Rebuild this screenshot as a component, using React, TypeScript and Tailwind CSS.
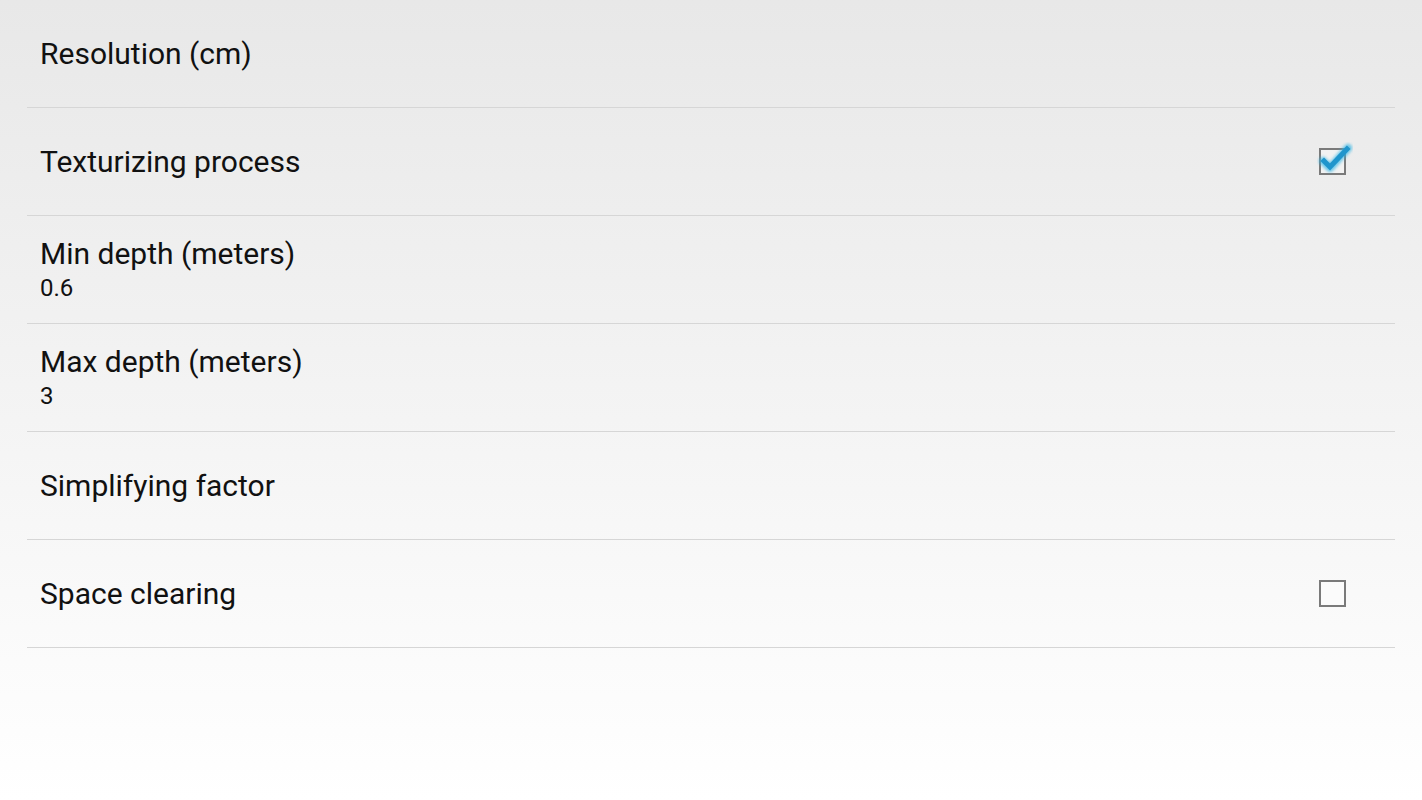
import React from "react";

function CheckBox({ checked }: { checked: boolean }) {
  return (
    <div className="relative w-[27px] h-[27px]">
      <div className="absolute inset-0 border-2 border-[#7a7a7a] bg-white/30" />
      {checked && (
        <svg className="absolute left-[-2px] top-[-8px]" width="36" height="36" viewBox="0 0 36 36">
          <defs>
            <filter id="glow" x="-30%" y="-30%" width="160%" height="160%">
              <feGaussianBlur stdDeviation="1.8" />
            </filter>
          </defs>
          <path d="M6 21 L13 28 L31 8" fill="none" stroke="#33b5e5" strokeWidth="8" strokeLinecap="round" strokeLinejoin="round" filter="url(#glow)" opacity="0.7" />
          <path d="M7 21 L13 27 L30 9" fill="none" stroke="#1f95cc" strokeWidth="5" strokeLinecap="square" strokeLinejoin="miter" />
        </svg>
      )}
    </div>
  );
}

type Row = { title: string; sub?: string; check?: boolean };

const rows: Row[] = [
  { title: "Resolution (cm)" },
  { title: "Texturizing process", check: true },
  { title: "Min depth (meters)", sub: "0.6" },
  { title: "Max depth (meters)", sub: "3" },
  { title: "Simplifying factor" },
  { title: "Space clearing", check: false },
];

export default function App() {
  return (
    <div
      className="w-[1422px] h-[800px] bg-gradient-to-b from-[#e8e8e8] to-white overflow-hidden"
      style={{ fontFamily: "Roboto, 'Noto Sans', sans-serif" }}
    >
      <div className="pl-[27px] pr-[27px]">
        {rows.map((r) => (
          <div key={r.title} className="h-[108px] border-b border-[#d6d6d6] flex items-center pl-[13px] pr-[49px]">
            <div className="flex-1 flex flex-col">
              <div className="text-[30px] leading-[36px] text-[#111]">{r.title}</div>
              {r.sub && <div className="text-[24px] leading-[32px] text-[#111]">{r.sub}</div>}
            </div>
            {r.check !== undefined && <CheckBox checked={r.check} />}
          </div>
        ))}
      </div>
    </div>
  );
}
